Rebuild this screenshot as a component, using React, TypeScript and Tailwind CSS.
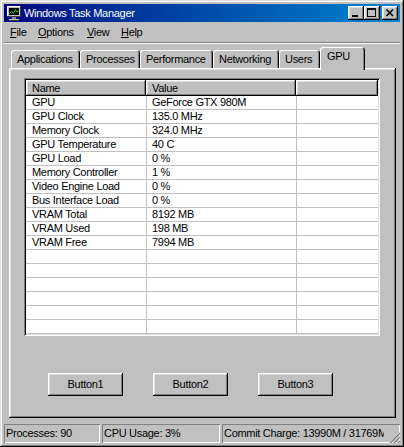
import React from 'react'

const rows: [string, string][] = [
  ['GPU', 'GeForce GTX 980M'],
  ['GPU Clock', '135.0 MHz'],
  ['Memory Clock', '324.0 MHz'],
  ['GPU Temperature', '40 C'],
  ['GPU Load', '0 %'],
  ['Memory Controller', '1 %'],
  ['Video Engine Load', '0 %'],
  ['Bus Interface Load', '0 %'],
  ['VRAM Total', '8192 MB'],
  ['VRAM Used', '198 MB'],
  ['VRAM Free', '7994 MB'],
  ['', ''],
  ['', ''],
  ['', ''],
  ['', ''],
  ['', ''],
  ['', ''],
]

const tabs = [
  { label: 'Applications', w: 'w-[69px]' },
  { label: 'Processes', w: 'w-[60px]' },
  { label: 'Performance', w: 'w-[73px]' },
  { label: 'Networking', w: 'w-[66px]' },
  { label: 'Users', w: 'w-[41px]' },
]

// classic 3d edges
const raised =
  'bg-[#c0c0c0] shadow-[inset_-1px_-1px_#000,inset_1px_1px_#fff,inset_-2px_-2px_#808080,inset_2px_2px_#dfdfdf]'
const sunkenThin = 'shadow-[inset_1px_1px_#808080,inset_-1px_-1px_#fff]'

function AppIcon() {
  return (
    <svg width="16" height="16" viewBox="0 0 16 16" shapeRendering="crispEdges">
      <rect x="1" y="1" width="14" height="11" fill="#c0c0c0" />
      <rect x="1" y="1" width="14" height="1" fill="#fff" />
      <rect x="1" y="1" width="1" height="11" fill="#fff" />
      <rect x="14" y="1" width="1" height="11" fill="#404040" />
      <rect x="1" y="11" width="14" height="1" fill="#404040" />
      <rect x="3" y="3" width="10" height="7" fill="#000" />
      <polyline points="3.5,8.5 5.5,6.5 7.5,8.5 9.5,4.5 11,7 12.5,5.5" fill="none" stroke="#00e000" strokeWidth="1" shapeRendering="auto" />
      <rect x="6" y="12" width="4" height="2" fill="#808080" />
      <rect x="3" y="14" width="10" height="2" fill="#c0c0c0" />
      <rect x="3" y="15" width="10" height="1" fill="#404040" />
    </svg>
  )
}

function CaptionButton({ kind }: { kind: 'min' | 'max' | 'close' }) {
  return (
    <div className={`w-[16px] h-[14px] ${raised} flex items-center justify-center`}>
      <svg width="16" height="14" viewBox="0 0 16 14" shapeRendering="crispEdges">
        {kind === 'min' && <rect x="4" y="9" width="6" height="2" fill="#000" />}
        {kind === 'max' && (
          <g fill="none" stroke="#000">
            <rect x="3.5" y="2.5" width="8" height="8" />
            <rect x="3" y="3" width="9" height="1" fill="#000" stroke="none" />
          </g>
        )}
        {kind === 'close' && (
          <g stroke="#000" strokeWidth="1.6" shapeRendering="auto">
            <line x1="4.5" y1="3.5" x2="11" y2="10" />
            <line x1="11" y1="3.5" x2="4.5" y2="10" />
          </g>
        )}
      </svg>
    </div>
  )
}

function Button({ label }: { label: string }) {
  return (
    <div className={`w-[75px] h-[23px] ${raised} flex items-center justify-center`}>
      {label}
    </div>
  )
}

export default function App() {
  return (
    <div className="w-[404px] h-[447px] bg-[#c0c0c0] p-[4px] flex flex-col text-[11px] leading-[13px] tracking-[-0.3px] text-black font-['Liberation_Sans',Arial,sans-serif] shadow-[inset_-1px_-1px_#000,inset_1px_1px_#dfdfdf,inset_-2px_-2px_#808080,inset_2px_2px_#fff] overflow-hidden">
      {/* title bar */}
      <div className="h-[18px] flex items-center bg-linear-to-r from-[#000080] to-[#1084d0] pl-[2px] pr-[2px]">
        <AppIcon />
        <span className="ml-[2px] text-white text-[11px]">Windows Task Manager</span>
        <div className="ml-auto flex items-center">
          <CaptionButton kind="min" />
          <CaptionButton kind="max" />
          <div className="w-[2px]" />
          <CaptionButton kind="close" />
        </div>
      </div>

      {/* menu */}
      <div className="h-[20px] flex items-center">
        <div className="w-[28px] pl-[6px]"><span className="underline underline-offset-1">F</span>ile</div>
        <div className="w-[49px] pl-[6px]"><span className="underline underline-offset-1">O</span>ptions</div>
        <div className="w-[34px] pl-[6px]"><span className="underline underline-offset-1">V</span>iew</div>
        <div className="w-[34px] pl-[6px]"><span className="underline underline-offset-1">H</span>elp</div>
      </div>
      <div className="h-[2px] border-t border-t-[#808080] border-b border-b-white" />

      {/* tabs */}
      <div className="mt-[3px] h-[21px] flex items-end pl-[7px] relative z-10">
        {tabs.map((t) => (
          <div
            key={t.label}
            className={`${t.w} h-[18px] pl-[6px] flex items-center rounded-t-[3px] shadow-[inset_1px_1px_#fff,inset_-1px_0_#000,inset_-2px_0_#808080]`}
          >
            {t.label}
          </div>
        ))}
        <div className="w-[45px] h-[23px] -mb-[2px] pl-[7px] pb-[4px] flex items-center rounded-t-[3px] bg-[#c0c0c0] shadow-[inset_1px_1px_#fff,inset_-1px_0_#000,inset_-2px_0_#808080]">
          GPU
        </div>
      </div>

      {/* panel */}
      <div className="ml-[5px] mr-[4px] h-[350px] flex flex-col shadow-[inset_-1px_-1px_#000,inset_1px_1px_#fff,inset_-2px_-2px_#808080,inset_2px_2px_#dfdfdf] pt-[10px] pl-[15px]">
        <div className="w-[356px] h-[258px] bg-white p-[2px] shadow-[inset_1px_1px_#808080,inset_-1px_-1px_#fff,inset_2px_2px_#000,inset_-2px_-2px_#dfdfdf]">
          <div className="flex h-[16px]">
            <div className={`w-[120px] ${raised} pl-[6px] flex items-center`}>Name</div>
            <div className={`w-[150px] ${raised} pl-[6px] flex items-center`}>Value</div>
            <div className={`w-[82px] ${raised}`} />
          </div>
          {rows.map(([name, value], i) => (
            <div key={i} className="flex h-[14px] border-b border-b-[#c0c0c0]">
              <div className="w-[121px] pl-[6px] border-r border-r-[#c0c0c0] flex items-center whitespace-nowrap">{name}</div>
              <div className="w-[150px] pl-[5px] border-r border-r-[#c0c0c0] flex items-center whitespace-nowrap">{value}</div>
              <div className="w-[81px]" />
            </div>
          ))}
        </div>

        <div className="mt-[37px] flex gap-[30px] pl-[24px]">
          <Button label="Button1" />
          <Button label="Button2" />
          <Button label="Button3" />
        </div>
      </div>

      {/* status bar */}
      <div className="mt-[6px] h-[19px] flex gap-[2px]">
        <div className={`w-[96px] ${sunkenThin} pl-[2px] flex items-center`}>Processes: 90</div>
        <div className={`w-[118px] ${sunkenThin} pl-[2px] flex items-center`}>CPU Usage: 3%</div>
        <div className={`flex-1 ${sunkenThin} pl-[2px] flex items-center relative`}>
          <div className="w-[160px] overflow-hidden whitespace-nowrap">Commit Charge: 13990M / 31769M</div>
          <svg className="absolute right-0 bottom-0" width="12" height="12" viewBox="0 0 12 12" shapeRendering="crispEdges">
            {[0, 4, 8].map((o) => (
              <g key={o}>
                <line x1={1 + o} y1="12" x2="12" y2={1 + o} stroke="#fff" strokeWidth="1" shapeRendering="auto" />
                <line x1={2 + o} y1="12" x2="12" y2={2 + o} stroke="#808080" strokeWidth="1.4" shapeRendering="auto" />
              </g>
            ))}
          </svg>
        </div>
      </div>
    </div>
  )
}
